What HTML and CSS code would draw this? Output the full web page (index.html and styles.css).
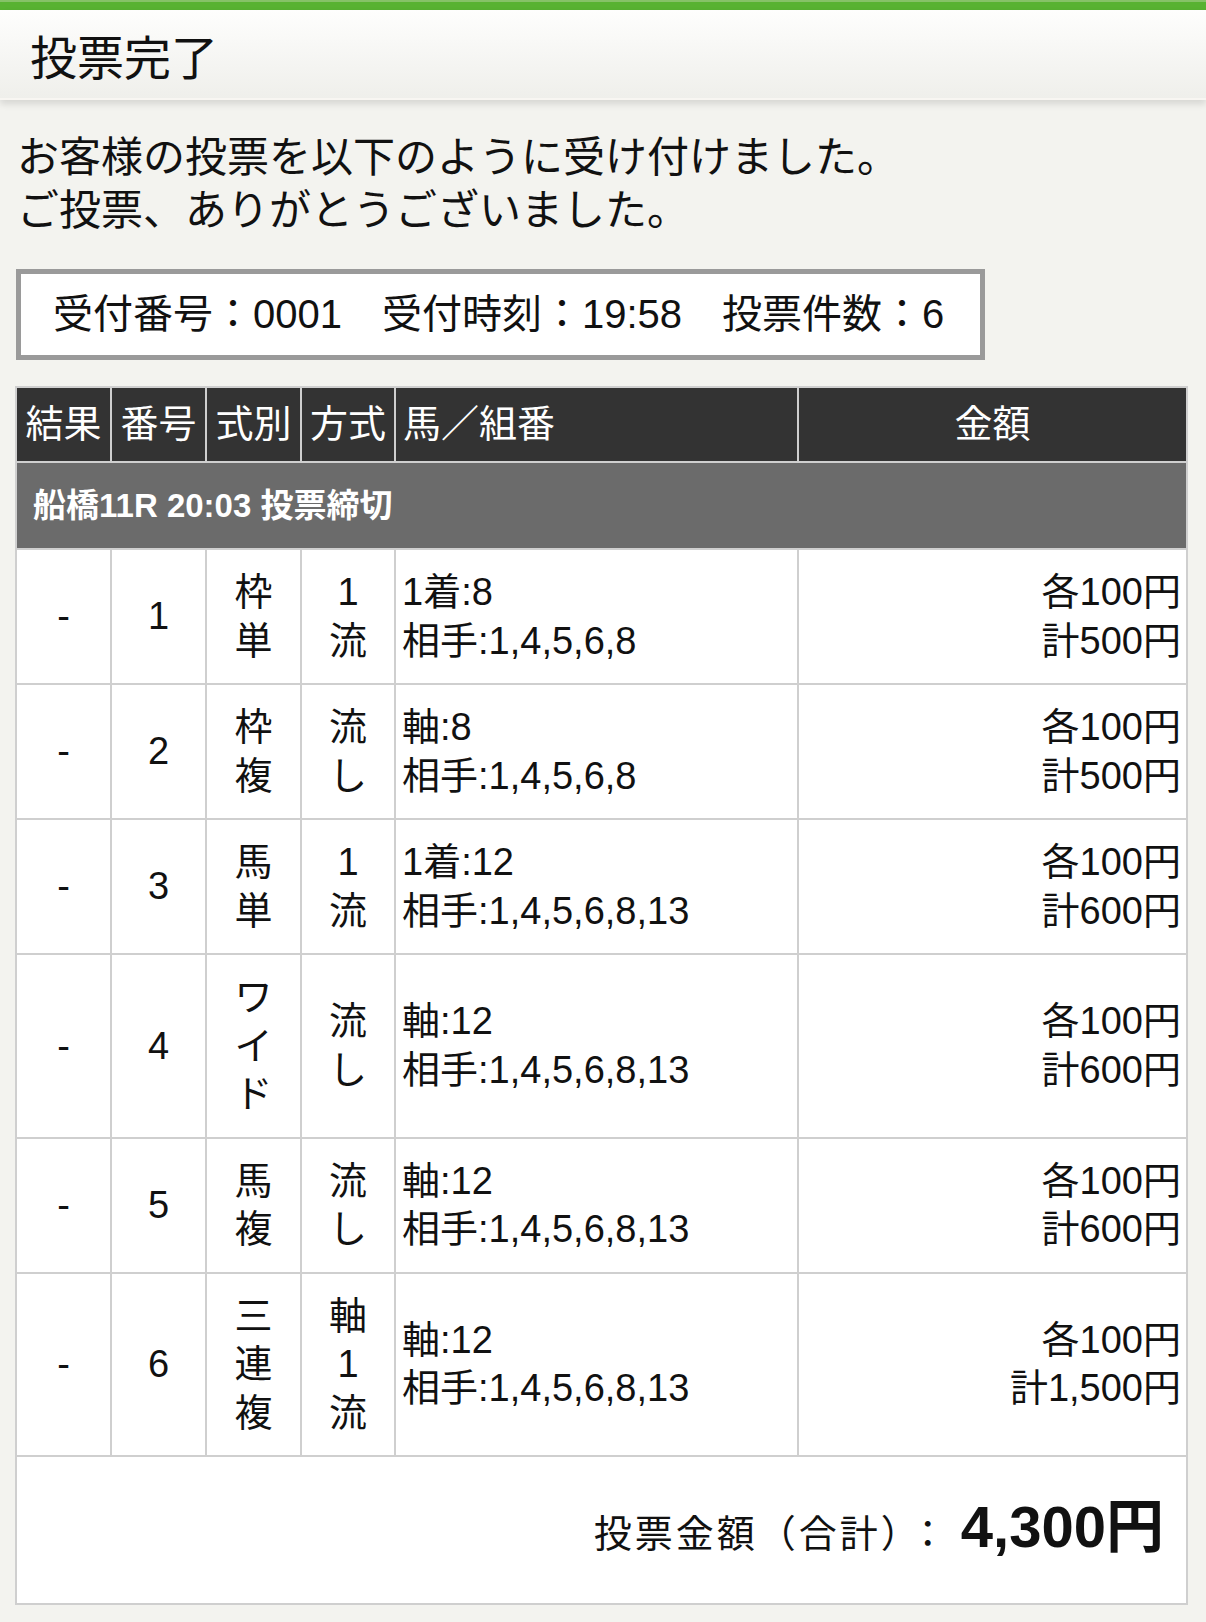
FILE: index.html
```html
<!DOCTYPE html>
<html lang="ja">
<head>
<meta charset="utf-8">
<title>投票完了</title>
<link rel="stylesheet" href="styles.css">
</head>
<body>
<div class="topbar"></div>
<header class="titlebar"><h1 class="title">投票完了</h1></header>
<div class="lead">
  <p class="lead-line">お客様の投票を以下のように受け付けました。</p>
  <p class="lead-line">ご投票、ありがとうございました。</p>
</div>
<div class="info-wrap">
  <div class="info">受付番号：0001　受付時刻：19:58　投票件数：6</div>
</div>
<table class="bets">
  <colgroup>
    <col class="c-narrow"><col class="c-narrow"><col class="c-narrow"><col class="c-narrow4"><col class="c-horse"><col>
  </colgroup>
  <thead>
    <tr><th>結果</th><th>番号</th><th>式別</th><th>方式</th><th class="th-left">馬／組番</th><th>金額</th></tr>
  </thead>
  <tbody>
    <tr class="race"><td colspan="6">船橋11R 20:03 投票締切</td></tr>
    <tr>
      <td class="ctr">-</td><td class="ctr">1</td><td class="ctr">枠<br>単</td><td class="ctr">1<br>流</td>
      <td class="horse">1着:8<br>相手:1,4,5,6,8</td><td class="amt">各100円<br>計500円</td>
    </tr>
    <tr>
      <td class="ctr">-</td><td class="ctr">2</td><td class="ctr">枠<br>複</td><td class="ctr">流<br>し</td>
      <td class="horse">軸:8<br>相手:1,4,5,6,8</td><td class="amt">各100円<br>計500円</td>
    </tr>
    <tr>
      <td class="ctr">-</td><td class="ctr">3</td><td class="ctr">馬<br>単</td><td class="ctr">1<br>流</td>
      <td class="horse">1着:12<br>相手:1,4,5,6,8,13</td><td class="amt">各100円<br>計600円</td>
    </tr>
    <tr>
      <td class="ctr">-</td><td class="ctr">4</td><td class="ctr">ワ<br>イ<br>ド</td><td class="ctr">流<br>し</td>
      <td class="horse">軸:12<br>相手:1,4,5,6,8,13</td><td class="amt">各100円<br>計600円</td>
    </tr>
    <tr>
      <td class="ctr">-</td><td class="ctr">5</td><td class="ctr">馬<br>複</td><td class="ctr">流<br>し</td>
      <td class="horse">軸:12<br>相手:1,4,5,6,8,13</td><td class="amt">各100円<br>計600円</td>
    </tr>
    <tr>
      <td class="ctr">-</td><td class="ctr">6</td><td class="ctr">三<br>連<br>複</td><td class="ctr">軸<br>1<br>流</td>
      <td class="horse">軸:12<br>相手:1,4,5,6,8,13</td><td class="amt">各100円<br>計1,500円</td>
    </tr>
    <tr class="total">
      <td colspan="6"><span class="total-label">投票金額（合計）</span><span class="total-colon">：</span><span class="total-sum">4,300円</span></td>
    </tr>
  </tbody>
</table>
</body>
</html>
```
FILE: styles.css
```css
html, body {
  margin: 0;
  padding: 0;
}
body {
  background: #f3f3ef;
  color: #111;
  font-family: "Liberation Sans", "Noto Sans CJK JP", sans-serif;
  padding-bottom: 19px;
}
.topbar {
  height: 10px;
  background: linear-gradient(#86c268 0, #86c268 2px, #58b232 2px, #58b232 100%);
}
.titlebar {
  height: 88px;
  display: flex;
  align-items: center;
  padding-left: 30px;
  background: linear-gradient(#fefefd, #efefeb);
  border-bottom: 2px solid #f8f6f2;
  box-shadow: 0 4px 7px rgba(0, 0, 0, 0.12);
}
.title {
  margin: 8px 0 0;
  font-size: 47px;
  font-weight: normal;
  line-height: 1;
}
.lead {
  margin-top: 31px;
  padding-left: 17px;
  font-size: 42px;
  line-height: 53px;
}
.lead-line {
  margin: 0;
}
.info-wrap {
  margin-top: 32px;
  padding-left: 16px;
}
.info {
  display: inline-block;
  background: #fff;
  border: 5px solid #9a9a9a;
  padding: 16px 36px 17px 32px;
  font-size: 40px;
  line-height: 48px;
}
.bets {
  margin: 26px 0 0 15px;
  width: 1173px;
  table-layout: fixed;
  border-collapse: separate;
  border-spacing: 2px;
  background: #cfcfcf;
  font-size: 38px;
}
.c-narrow { width: 93px; }
.c-narrow4 { width: 92px; }
.c-horse { width: 401px; }
.bets th {
  background: #333;
  color: #fff;
  font-weight: normal;
  line-height: 48px;
  padding: 12px 0 13px;
  text-align: center;
}
.bets th.th-left {
  text-align: left;
  padding-left: 7px;
}
.bets tbody td {
  background: #fff;
  line-height: 48.5px;
  padding: 18px 0;
  vertical-align: middle;
}
.bets tbody .race td {
  background: #6b6b6b;
  color: #fff;
  font-weight: bold;
  font-size: 33px;
  line-height: 45px;
  padding: 20px 16px;
}
.bets td.ctr {
  text-align: center;
}
.bets td.horse {
  text-align: left;
  padding-left: 6px;
}
.bets td.amt {
  text-align: right;
  padding-right: 5px;
}
.bets tbody .total td {
  text-align: right;
  padding: 37px 22px 36px 0;
  line-height: 66px;
}
.total-label {
  font-size: 38px;
  letter-spacing: 3px;
}
.total-colon {
  font-size: 38px;
  margin: 0 14px 0 6px;
}
.total-sum {
  font-size: 58px;
  font-weight: bold;
}
```
